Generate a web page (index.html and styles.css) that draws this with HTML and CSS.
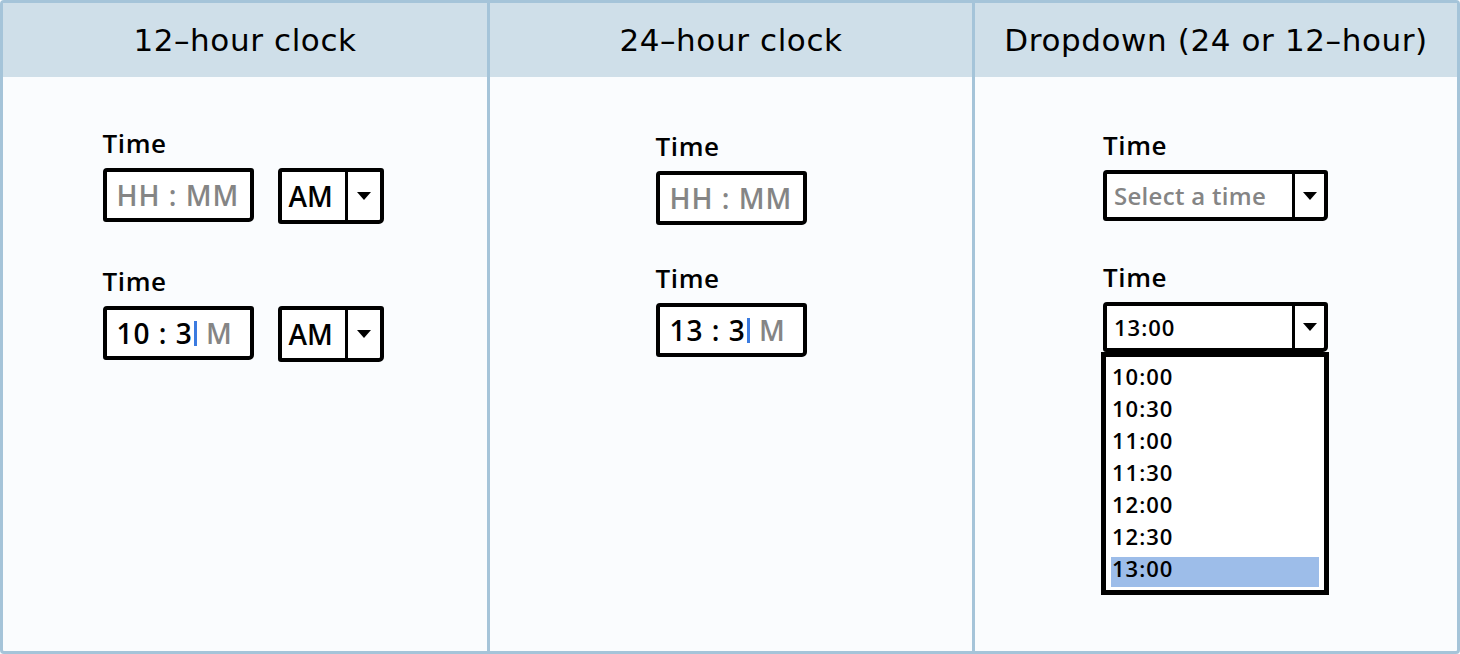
FILE: index.html
```html
<!DOCTYPE html>
<html lang="en">
<head>
    <meta charset="UTF-8">
    <title>Time input patterns</title>
    <link rel="stylesheet" href="styles.css">
</head>
<body>
    <div class="board">
        <div class="col">
            <div class="col-head">12&#8211;hour clock</div>
            <div class="col-body twelve">
                <div class="stack">
                    <div class="field">
                        <div class="label">Time</div>
                        <div class="row">
                            <div class="box time-box"><span class="hint">HH : MM</span></div>
                            <div class="box ampm">
                                <span class="ampm-text">AM</span>
                                <span class="arrow"></span>
                            </div>
                        </div>
                    </div>
                    <div class="field">
                        <div class="label">Time</div>
                        <div class="row">
                            <div class="box time-box"><span class="val">10 : 3</span><span class="caret"></span><span class="hint"> M</span></div>
                            <div class="box ampm">
                                <span class="ampm-text">AM</span>
                                <span class="arrow"></span>
                            </div>
                        </div>
                    </div>
                </div>
            </div>
        </div>

        <div class="col">
            <div class="col-head">24&#8211;hour clock</div>
            <div class="col-body twentyfour">
                <div class="stack">
                    <div class="field">
                        <div class="label">Time</div>
                        <div class="box time-box"><span class="hint">HH : MM</span></div>
                    </div>
                    <div class="field">
                        <div class="label">Time</div>
                        <div class="box time-box"><span class="val">13 : 3</span><span class="caret"></span><span class="hint"> M</span></div>
                    </div>
                </div>
            </div>
        </div>

        <div class="col">
            <div class="col-head">Dropdown (24 or 12&#8211;hour)</div>
            <div class="col-body dropdown">
                <div class="stack">
                    <div class="field">
                        <div class="label">Time</div>
                        <div class="box select">
                            <span class="select-text placeholder">Select a time</span>
                            <span class="arrow"></span>
                        </div>
                    </div>
                    <div class="field">
                        <div class="label">Time</div>
                        <div class="box select open">
                            <span class="select-text">13:00</span>
                            <span class="arrow"></span>
                        </div>
                        <ul class="options">
                            <li>10:00</li>
                            <li>10:30</li>
                            <li>11:00</li>
                            <li>11:30</li>
                            <li>12:00</li>
                            <li>12:30</li>
                            <li class="selected">13:00</li>
                        </ul>
                    </div>
                </div>
            </div>
        </div>
    </div>
</body>
</html>
```

FILE: styles.css
```css
* {
    box-sizing: border-box;
}
body {
    margin: 0;
    background-color: #fafcfe;
    font-family: "Open Sans", "Noto Sans", sans-serif;
}
.board {
    width: 1460px;
    height: 654px;
    display: grid;
    grid-template-columns: 484px 485px 485px;
    border: 3px solid #a5c4d9;
    border-radius: 4px;
    background-color: #fafcfe;
}
.col {
    display: flex;
    flex-direction: column;
}
.col + .col {
    border-left: 3px solid #a5c4d9;
}
.col-head {
    height: 74px;
    background-color: #cfdfe9;
    display: flex;
    align-items: center;
    justify-content: center;
    font-family: "DejaVu Sans", sans-serif;
    font-size: 31px;
    letter-spacing: 0.6px;
    color: #000;
}
.col-body {
    flex: 1;
    display: flex;
    justify-content: center;
}
.col-body.twelve {
    padding-top: 51px;
    padding-right: 4px;
}
.col-body.twelve .stack {
    gap: 42px;
}
.col-body.twentyfour {
    padding-top: 54px;
}
.col-body.twentyfour .stack {
    gap: 38px;
}
.col-body.dropdown {
    padding-top: 53px;
}
.col-body.dropdown .stack {
    gap: 41px;
}
.stack {
    display: flex;
    flex-direction: column;
}
.label {
    font-size: 26px;
    font-weight: 600;
    line-height: 30px;
    margin-bottom: 10px;
    letter-spacing: 0.6px;
}
.row {
    display: flex;
    gap: 24px;
}
.box {
    border: 4px solid #000;
    border-radius: 4px 3px 5px 3px;
    background-color: #fff;
    display: flex;
    align-items: center;
}
.time-box {
    width: 151px;
    height: 54px;
    padding-left: 10px;
    font-size: 28px;
    font-weight: 600;
    letter-spacing: 1px;
}
.hint {
    color: #858585;
    white-space: pre;
}
.val {
    color: #000;
    white-space: pre;
}
.caret {
    display: inline-block;
    width: 3px;
    height: 25px;
    background-color: #3b7be0;
    margin: 0 1px 0 1px;
}
.ampm {
    width: 106px;
    height: 56px;
}
.ampm-text {
    width: 66px;
    padding-left: 7px;
    font-size: 28px;
    font-weight: 600;
    border-right: 3px solid #000;
    height: 100%;
    display: flex;
    align-items: center;
}
.arrow {
    flex: 1;
    height: 100%;
    display: flex;
    align-items: center;
    justify-content: center;
}
.arrow::after {
    content: "";
    border-left: 7px solid transparent;
    border-right: 7px solid transparent;
    border-top: 8px solid #000;
}
.select {
    width: 225px;
    height: 51px;
}
.select.open {
    height: 50px;
}
.select-text {
    width: 188px;
    height: 100%;
    padding-left: 7px;
    border-right: 3px solid #000;
    display: flex;
    align-items: center;
    font-size: 22px;
    font-weight: 600;
    letter-spacing: 1px;
}
.select-text.placeholder {
    font-size: 24px;
    letter-spacing: 0.3px;
    color: #858585;
}
.options {
    list-style: none;
    margin: 0 0 0 -2px;
    width: 228px;
    padding: 8px 5px 3px;
    border: 5px solid #000;
    background-color: #fff;
}
.options li {
    height: 32px;
    line-height: 22px;
    padding-left: 1px;
    font-size: 22px;
    font-weight: 600;
    letter-spacing: 1px;
}
.options li.selected {
    background-color: #9dbde9;
    height: 30px;
}
```
